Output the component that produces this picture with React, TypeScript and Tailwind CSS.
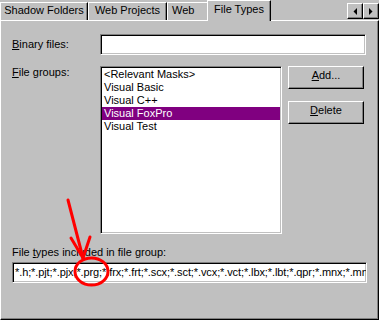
import type { ReactNode } from "react";

function Tab({ className, children }: { className: string; children: ReactNode }) {
  return (
    <div
      className={`flex h-[18px] items-start border-l border-t border-r border-white border-r-black pt-px shadow-[inset_-1px_0_0_#808080] ${className}`}
    >
      {children}
    </div>
  );
}

function ScrollButton({ dir }: { dir: "left" | "right" }) {
  return (
    <div className="flex h-[16px] w-[16px] items-center justify-center border border-white border-b-black border-r-black bg-[#c0c0c0] shadow-[inset_-1px_-1px_0_#808080]">
      <svg width="4" height="7" viewBox="0 0 4 7">
        {dir === "left" ? (
          <polygon points="4,0 4,7 0.5,3.5" fill="#000" />
        ) : (
          <polygon points="0,0 0,7 3.5,3.5" fill="#000" />
        )}
      </svg>
    </div>
  );
}

function Button({ children }: { children: ReactNode }) {
  return (
    <div className="flex h-[23px] w-[76px] items-center justify-center border border-white border-b-black border-r-black pb-[4px] shadow-[inset_-1px_-1px_0_#808080]">
      {children}
    </div>
  );
}

const groups = ["<Relevant Masks>", "Visual Basic", "Visual C++", "Visual FoxPro", "Visual Test"];

export default function App() {
  return (
    <div className="relative flex h-[320px] w-[379px] flex-col overflow-hidden bg-[#c0c0c0] font-['Liberation_Sans',Arial,sans-serif] text-[11px] leading-[13px] text-black">
      {/* tab strip */}
      <div className="relative z-10 flex h-[20px] items-end">
        <Tab className="w-[88px] justify-center">Shadow Folders</Tab>
        <Tab className="w-[79px] justify-center">Web Projects</Tab>
        <Tab className="w-[42px] justify-start pl-[4px]">Web</Tab>
        <div className="-mb-px -ml-[2px] flex h-[21px] w-[64px] items-start justify-center border-l border-t border-r border-white border-r-black bg-[#c0c0c0] pt-[2px] shadow-[inset_-1px_0_0_#808080]">
          File Types
        </div>
        <div className="mt-[3px] ml-auto flex self-start">
          <ScrollButton dir="left" />
          <ScrollButton dir="right" />
        </div>
      </div>

      {/* page */}
      <div className="flex flex-1 flex-col border border-white border-b-black border-r-black pl-[11px] shadow-[inset_-1px_-1px_0_#808080]">
        <div className="mt-[13px] flex items-center">
          <div className="w-[88px]">
            <u>B</u>inary files:
          </div>
          <div className="h-[21px] w-[266px] border border-[#808080] border-b-white border-r-white bg-white shadow-[inset_1px_1px_0_#000,inset_-1px_-1px_0_#c0c0c0]" />
        </div>

        <div className="mt-[11px] flex items-start">
          <div className="w-[88px]">
            <u>F</u>ile groups:
          </div>
          <div className="flex h-[168px] w-[182px] flex-col border border-[#808080] border-b-white border-r-white bg-white p-px shadow-[inset_1px_1px_0_#000,inset_-1px_-1px_0_#c0c0c0]">
            {groups.map((g) => (
              <div
                key={g}
                className={
                  g === "Visual FoxPro"
                    ? "h-[13px] bg-[#800080] px-[2px] text-white"
                    : "h-[13px] px-[2px]"
                }
              >
                {g}
              </div>
            ))}
          </div>
          <div className="ml-[6px] flex flex-col gap-[12px]">
            <Button>
              <span>
                <u>A</u>dd...
              </span>
            </Button>
            <Button>
              <span>
                <u>D</u>elete
              </span>
            </Button>
          </div>
        </div>

        <div className="mt-[12px]">
          File <u>t</u>ypes included in file group:
        </div>
        <div className="mt-[3px] flex h-[21px] w-[355px] items-center overflow-hidden whitespace-nowrap border border-[#808080] border-b-white border-r-white bg-white pl-[2px] tracking-[-0.1px] shadow-[inset_1px_1px_0_#000,inset_-1px_-1px_0_#c0c0c0]">
          *.h;*.pjt;*.pjx;*.prg;*.frx;*.frt;*.scx;*.sct;*.vcx;*.vct;*.lbx;*.lbt;*.qpr;*.mnx;*.mn
        </div>
      </div>

      {/* red annotation */}
      <svg
        className="pointer-events-none absolute left-0 top-0 z-20"
        width="379"
        height="320"
        viewBox="0 0 379 320"
      >
        <g stroke="#ff0000" strokeWidth="3" fill="none" strokeLinecap="round">
          <line x1="68" y1="200" x2="83" y2="258" />
          <line x1="71" y1="238" x2="83" y2="258" />
          <line x1="90" y1="237" x2="83" y2="258" />
          <ellipse cx="91.5" cy="271.5" rx="16.5" ry="13.5" />
        </g>
      </svg>
    </div>
  );
}
